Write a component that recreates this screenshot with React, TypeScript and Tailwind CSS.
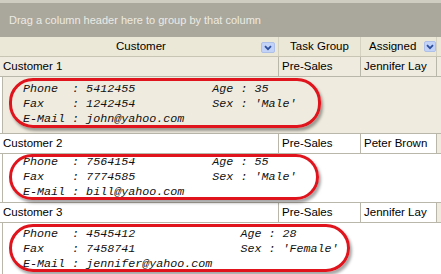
import React from 'react';

type Rec = {
  name: string;
  group: string;
  assigned: string;
  phone: string;
  fax: string;
  email: string;
  age: string;
  sex: string;
  selected?: boolean;
  detailH: string;
  pad: string;
  ring: string;
};

const records: Rec[] = [
  {
    name: 'Customer 1', group: 'Pre-Sales', assigned: 'Jennifer Lay',
    phone: '5412455', fax: '1242454', email: 'john@yahoo.com', age: '35', sex: "'Male'",
    selected: true, detailH: 'h-[56px]', pad: 'pt-[5px]', ring: 'top-[1px] h-[50px] w-[312px]',
  },
  {
    name: 'Customer 2', group: 'Pre-Sales', assigned: 'Peter Brown',
    phone: '7564154', fax: '7774585', email: 'bill@yahoo.com', age: '55', sex: "'Male'",
    detailH: 'h-[48px]', pad: 'pt-[1px]', ring: 'top-0 h-[46px] w-[310px]',
  },
  {
    name: 'Customer 3', group: 'Pre-Sales', assigned: 'Jennifer Lay',
    phone: '4545412', fax: '7458741', email: 'jennifer@yahoo.com', age: '28', sex: "'Female'",
    detailH: 'h-[51px]', pad: 'pt-[4px]', ring: 'top-[1px] h-[48px] w-[341px]',
  },
];

const DropBtn = () => (
  <span className="flex h-[11px] w-[14px] items-center justify-center rounded-[2px] bg-[#c3d3f7] border border-[#aebfe8]">
    <svg width="8" height="6" viewBox="0 0 8 6">
      <path d="M1 1.2 L4 4.2 L7 1.2" fill="none" stroke="#2d4f9e" strokeWidth="1.8" />
    </svg>
  </span>
);

const Detail = ({ r }: { r: Rec }) => (
  <div className={`relative ${r.detailH} ml-[2px] border-l border-[#b9b6aa] ${r.selected ? 'bg-[#efebdf]' : 'bg-white'}`}>
    <div
      className={`flex gap-[28px] pl-[20px] ${r.pad} text-[11.7px] leading-[15px] italic text-[#111] whitespace-pre`}
      style={{ fontFamily: '"Liberation Mono", "Courier New", monospace' }}
    >
      <div>
        <div>{'Phone  : ' + r.phone}</div>
        <div>{'Fax    : ' + r.fax}</div>
        <div>{'E-Mail : ' + r.email}</div>
      </div>
      <div>
        <div>{'Age : ' + r.age}</div>
        <div>{'Sex : ' + r.sex}</div>
      </div>
    </div>
    <div
      className={`absolute left-[6px] ${r.ring} rounded-[24px] border-[3px] border-[#e0141c] shadow-[2px_3px_3px_rgba(0,0,0,0.35)]`}
    />
  </div>
);

const App = () => {
  return (
    <div
      className="w-[441px] h-[274px] overflow-hidden bg-white text-[11.5px] text-black"
      style={{ fontFamily: '"Liberation Sans", Tahoma, Arial, sans-serif' }}
    >
      <div className="h-[37px] border-t-[3px] border-[#cfccc2] bg-[#aaa79c] flex items-center pl-[9px] text-[#ecebe3] text-[11px]">
        Drag a column header here to group by that column
      </div>

      <div className="grid grid-cols-[279px_82px_76px_4px] h-[20px] bg-[#ebe8d8] border-b border-[#c9c5b4]">
        <div className="relative flex items-center justify-center border-r border-[#d6d2c2]">
          <span className="pl-[4px]">Customer</span>
          <span className="absolute right-[3px] top-[5px]"><DropBtn /></span>
        </div>
        <div className="flex items-center justify-center border-r border-[#d6d2c2]">Task Group</div>
        <div className="flex items-center gap-[8px] pl-[8px] border-r border-[#d6d2c2]">
          <span>Assigned</span>
          <DropBtn />
        </div>
        <div />
      </div>

      {records.map((r) => (
        <div key={r.name}>
          <div
            className={`grid grid-cols-[279px_82px_76px_4px] h-[20px] border-b border-[#b9b6aa] ${r.selected ? 'bg-[#efebdf]' : 'bg-white'}`}
          >
            <div className="flex items-center pl-[3px] border-r border-[#b9b6aa]">{r.name}</div>
            <div className="flex items-center pl-[3px] border-r border-[#b9b6aa]">{r.group}</div>
            <div className="flex items-center pl-[3px] border-r border-[#b9b6aa]">{r.assigned}</div>
            <div className="bg-[#efebdf]" />
          </div>
          <div className="border-b border-[#b9b6aa]">
            <Detail r={r} />
          </div>
        </div>
      ))}
    </div>
  );
};

export default App;
